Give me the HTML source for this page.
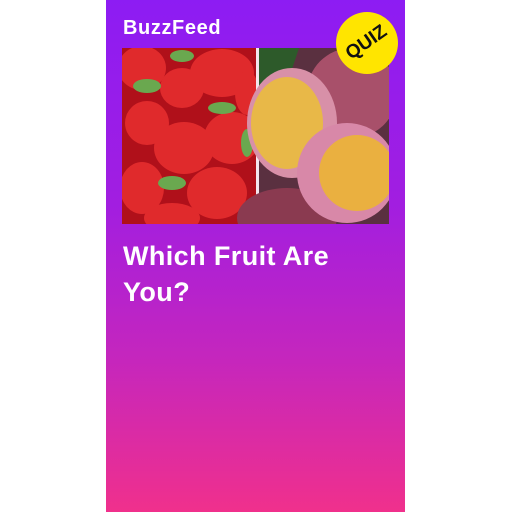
<!DOCTYPE html>
<html><head><style>
body{margin:0;width:512px;height:512px;background:#fff;position:relative;overflow:hidden;font-family:"Liberation Sans",sans-serif}
.card{position:absolute;left:106px;top:0;width:299px;height:512px;background:linear-gradient(#8d1cf3 0%,#a21ee0 40%,#c526bd 70%,#f0308c 100%)}
.logo{position:absolute;left:17px;top:17px;color:#fff;font-weight:bold;font-size:20px;letter-spacing:0.6px}
.img{position:absolute;left:16px;top:48px;width:267px;height:176px;overflow:hidden}
.title{position:absolute;left:17px;top:238px;color:#fff;font-weight:bold;font-size:27px;line-height:36px;letter-spacing:0.4px}
.quiz{position:absolute;left:230px;top:12px;width:62px;height:62px;border-radius:50%;background:#ffe500;display:flex;align-items:center;justify-content:center}
.quiz span{transform:rotate(-35deg);font-weight:900;font-size:19px;color:#111}
</style></head><body>
<div class="card">
<div class="logo">BuzzFeed</div>
<div class="img">
<svg width="267" height="176" viewBox="0 0 267 176">
<rect x="0" y="0" width="134" height="176" fill="#b0101a"/>
<g fill="#e02a2c">
<ellipse cx="20" cy="20" rx="24" ry="22"/><ellipse cx="100" cy="25" rx="32" ry="24"/>
<ellipse cx="60" cy="40" rx="22" ry="20"/><ellipse cx="25" cy="75" rx="22" ry="22"/>
<ellipse cx="110" cy="90" rx="28" ry="26"/><ellipse cx="62" cy="100" rx="30" ry="26"/>
<ellipse cx="20" cy="140" rx="22" ry="26"/><ellipse cx="95" cy="145" rx="30" ry="26"/>
<ellipse cx="50" cy="170" rx="28" ry="15"/><ellipse cx="125" cy="45" rx="12" ry="22"/>
</g>
<g fill="#6aa84f"><ellipse cx="25" cy="38" rx="14" ry="7"/><ellipse cx="60" cy="8" rx="12" ry="6"/><ellipse cx="100" cy="60" rx="14" ry="6"/><ellipse cx="50" cy="135" rx="14" ry="7"/><ellipse cx="125" cy="95" rx="6" ry="14"/></g>
<rect x="134" y="0" width="3" height="176" fill="#f4e6ee"/>
<rect x="137" y="0" width="130" height="176" fill="#5a3040"/>
<path d="M137 0h40l-20 60-20 10z" fill="#2d5a2a"/>
<ellipse cx="230" cy="45" rx="45" ry="45" fill="#a8506a"/>
<ellipse cx="165" cy="170" rx="50" ry="30" fill="#8a3a50"/>
<ellipse cx="170" cy="75" rx="45" ry="55" fill="#d890a8"/>
<ellipse cx="165" cy="75" rx="36" ry="46" fill="#e8b848"/>
<ellipse cx="225" cy="125" rx="50" ry="50" fill="#d888a8"/>
<ellipse cx="235" cy="125" rx="38" ry="38" fill="#eab040"/>
</svg>
</div>
<div class="quiz"><span>QUIZ</span></div>
<div class="title">Which Fruit Are<br>You?</div>
</div>
</body></html>
